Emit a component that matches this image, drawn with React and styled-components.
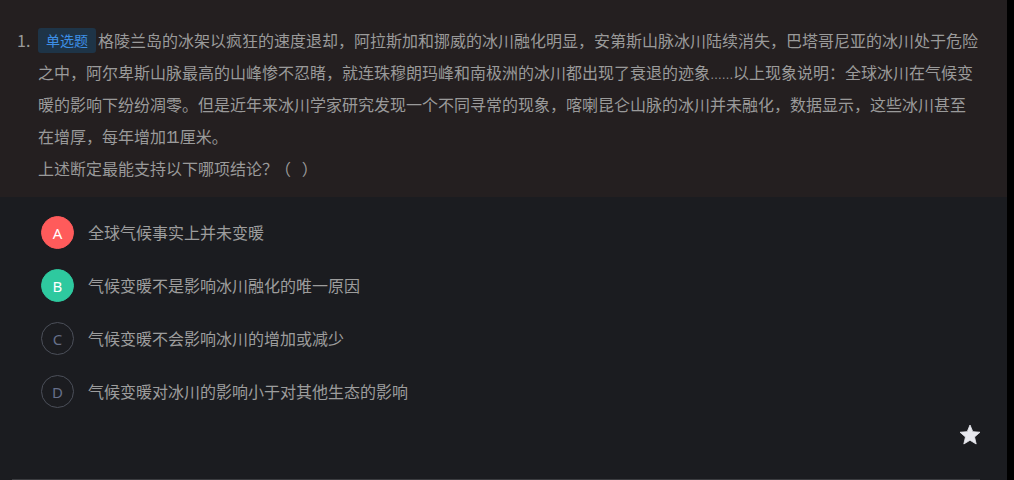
import React from "react"
import styled, { createGlobalStyle } from "styled-components"

const GlobalStyle = createGlobalStyle`
    html, body {
        margin: 0;
        padding: 0;
        background: #1b1c20;
    }
    * {
        box-sizing: border-box;
    }
`

const options = [
    { key: "A", text: "全球气候事实上并未变暖", state: "wrong" },
    { key: "B", text: "气候变暖不是影响冰川融化的唯一原因", state: "right" },
    { key: "C", text: "气候变暖不会影响冰川的增加或减少", state: "idle" },
    { key: "D", text: "气候变暖对冰川的影响小于对其他生态的影响", state: "idle" },
]

const StarIcon = () => (
    <svg width="24" height="24" viewBox="0 0 24 24">
        <path
            d="M12 17.27L18.18 21l-1.64-7.03L22 9.24l-7.19-.61L12 2 9.19 8.63 2 9.24l5.46 4.73L5.82 21z"
            fill="#e8e9ef"
            stroke="#e8e9ef"
            strokeWidth="0.8"
            strokeLinejoin="round"
        />
    </svg>
)

const App = () => {
    return (
        <>
            <GlobalStyle />
            <Page>
                <Main>
                    <Question>
                        <Number>1.</Number>
                        <Stem>
                            <Badge>单选题</Badge>
                            格陵兰岛的冰架以疯狂的速度退却，阿拉斯加和挪威的冰川融化明显，安第斯山脉冰川陆续消失，巴塔哥尼亚的冰川处于危险之中，阿尔卑斯山脉最高的山峰惨不忍睹，就连珠穆朗玛峰和南极洲的冰川都出现了衰退的迹象<Ellipsis>……</Ellipsis>以上现象说明：全球冰川在气候变暖的影响下纷纷凋零。但是近年来冰川学家研究发现一个不同寻常的现象，喀喇昆仑山脉的冰川并未融化，数据显示，这些冰川甚至在增厚，每年增加<Digits>11</Digits>厘米。
                            <br />
                            上述断定最能支持以下哪项结论？<Blank>（&nbsp;&nbsp;&nbsp;）</Blank>
                        </Stem>
                    </Question>

                    <OptionList>
                        {options.map((option) => (
                            <Option key={option.key}>
                                <Letter $state={option.state}>{option.key}</Letter>
                                <OptionText>{option.text}</OptionText>
                            </Option>
                        ))}
                    </OptionList>

                    <Actions>
                        <StarIcon />
                    </Actions>

                    <ScrollThumb />
                </Main>
                <Gutter />
            </Page>
        </>
    )
}

const Page = styled.div`
    display: flex;
    height: 100vh;
    font-family: "Noto Sans CJK SC", "Noto Sans", sans-serif;
`

const Main = styled.div`
    flex: 1;
    display: flex;
    flex-direction: column;
    background: #1b1c20;
`

const Gutter = styled.div`
    width: 7px;
    background: #000;
`

const Question = styled.div`
    display: flex;
    padding: 24px 27px 13px 17px;
    background: #241f20;
    color: #9a9a9a;
    font-size: 16px;
    line-height: 32px;
`

const Number = styled.div`
    width: 21px;
    flex-shrink: 0;
`

const Stem = styled.div`
    flex: 1;
`

const Ellipsis = styled.span`
    font-family: "Liberation Sans", sans-serif;
    font-size: 12px;
    line-height: 1;
    letter-spacing: -0.5px;
`

const Digits = styled.span`
    font-family: "Liberation Sans", sans-serif;
    line-height: 1;
    letter-spacing: -3px;
    margin-right: 3px;
`

const Blank = styled.span`
    margin-left: -3px;
`

const Badge = styled.span`
    display: inline-block;
    height: 25px;
    line-height: 25px;
    padding: 0 8px;
    margin-right: 2px;
    border-radius: 3px;
    background: #1e3447;
    color: #3d8fe6;
    font-size: 14px;
    vertical-align: 1px;
`

const OptionList = styled.ul`
    list-style: none;
    margin: 0;
    padding: 9px 0 0 41px;
`

const Option = styled.li`
    display: flex;
    align-items: center;
    height: 53px;
    gap: 14px;
`

const letterColors = {
    wrong: { bg: "#ff5b5b", border: "#ff5b5b", color: "#ffffff" },
    right: { bg: "#2ec99f", border: "#2ec99f", color: "#ffffff" },
    idle: { bg: "transparent", border: "#4b4f59", color: "#66708a" },
}

const Letter = styled.span`
    width: 33px;
    height: 33px;
    border-radius: 50%;
    display: flex;
    align-items: center;
    justify-content: center;
    font-family: "Noto Sans", sans-serif;
    font-size: 15px;
    background: ${(p) => letterColors[p.$state].bg};
    border: 1px solid ${(p) => letterColors[p.$state].border};
    color: ${(p) => letterColors[p.$state].color};
`

const OptionText = styled.span`
    color: #9d9d9d;
    font-size: 16px;
    line-height: 20px;
    padding-bottom: 2px;
`

const Actions = styled.div`
    display: flex;
    justify-content: flex-end;
    padding-right: 25px;
    margin-top: 5px;
`

const ScrollThumb = styled.div`
    margin: auto 27px 0 12px;
    height: 1px;
    background: #3b3c40;
`

export default App
